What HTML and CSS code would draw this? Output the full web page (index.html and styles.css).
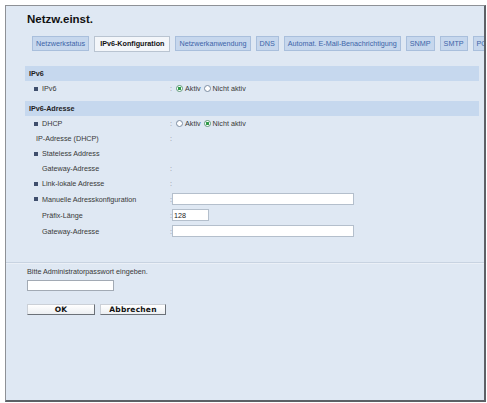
FILE: index.html
```html
<!DOCTYPE html>
<html lang="de">
<head>
<meta charset="utf-8">
<title>Netzw.einst.</title>
<link rel="stylesheet" href="styles.css">
</head>
<body>
<div class="frame">
  <h1 class="title">Netzw.einst.</h1>
  <div class="tabs">
    <span class="tab">Netzwerkstatus</span>
    <span class="tab active">IPv6-Konfiguration</span>
    <span class="tab">Netzwerkanwendung</span>
    <span class="tab">DNS</span>
    <span class="tab">Automat. E-Mail-Benachrichtigung</span>
    <span class="tab">SNMP</span>
    <span class="tab">SMTP</span>
    <span class="tab">POP3/IMAP4</span>
  </div>

  <div class="content">
    <div class="section">
      <div class="sec-head">IPv6</div>
      <div class="row">
        <div class="label bullet">IPv6</div>
        <div class="value"><span class="colon">:</span><input type="radio" class="radio" name="ipv6" checked><span>Aktiv</span><input type="radio" class="radio second" name="ipv6"><span>Nicht aktiv</span></div>
      </div>
    </div>

    <div class="section">
      <div class="sec-head">IPv6-Adresse</div>
      <div class="row">
        <div class="label bullet">DHCP</div>
        <div class="value"><span class="colon">:</span><input type="radio" class="radio" name="dhcp"><span>Aktiv</span><input type="radio" class="radio second" name="dhcp" checked><span>Nicht aktiv</span></div>
      </div>
      <div class="row">
        <div class="label sub">IP-Adresse (DHCP)</div>
        <div class="value"><span class="colon">:</span></div>
      </div>
      <div class="row">
        <div class="label bullet">Stateless Address</div>
        <div class="value"></div>
      </div>
      <div class="row">
        <div class="label sub2">Gateway-Adresse</div>
        <div class="value"><span class="colon">:</span></div>
      </div>
      <div class="row">
        <div class="label bullet">Link-lokale Adresse</div>
        <div class="value"><span class="colon">:</span></div>
      </div>
      <div class="row tall">
        <div class="label bullet">Manuelle Adresskonfiguration</div>
        <div class="value"><span class="colon tight">:</span><input type="text" class="field wide" value=""></div>
      </div>
      <div class="row tall">
        <div class="label sub2">Präfix-Länge</div>
        <div class="value"><span class="colon tight">:</span><input type="text" class="field short" value="128"></div>
      </div>
      <div class="row tall">
        <div class="label sub2">Gateway-Adresse</div>
        <div class="value"><span class="colon tight">:</span><input type="text" class="field wide" value=""></div>
      </div>
    </div>
  </div>

  <div class="sep"></div>

  <div class="auth">
    <div class="auth-text">Bitte Administratorpasswort eingeben.</div>
    <input type="password" class="field pass" value="">
    <div class="buttons">
      <button class="btn ok">OK</button>
      <button class="btn cancel">Abbrechen</button>
    </div>
  </div>
</div>
</body>
</html>
```

FILE: styles.css
```css
* {
  box-sizing: border-box;
}

body {
  margin: 0;
  background: #ffffff;
  font-family: "Liberation Sans", Arial, sans-serif;
  font-size: 7.2px;
  color: #383838;
}

.frame {
  margin: 5px 0 0 5px;
  width: 481px;
  height: 397px;
  border-style: solid;
  border-width: 1px 2px 2px 1px;
  border-color: #8e9196 #5d6166 #5d6166 #8e9196;
  background: #dfe8f3;
  overflow: hidden;
}

.title {
  margin: 6px 0 0 21px;
  font-size: 11.5px;
  line-height: 14px;
  font-weight: bold;
  color: #111111;
}

.tabs {
  display: flex;
  align-items: flex-start;
  gap: 5px;
  margin-top: 10px;
  padding-left: 26px;
  height: 16px;
  white-space: nowrap;
  overflow: hidden;
}

.tab {
  flex: none;
  height: 15px;
  line-height: 13px;
  padding: 0 3px;
  border: 1px solid #a9bfdc;
  background: #c6d7ed;
  color: #3c64a8;
}

.tab.active {
  height: 16px;
  padding: 0 5px;
  background: #f3f6fa;
  border-color: #b9c4d1;
  color: #111111;
  font-weight: bold;
}

.content {
  margin: 14px 5px 0 19px;
}

.section + .section {
  margin-top: 5px;
}

.sec-head {
  height: 15px;
  line-height: 15px;
  padding-left: 4px;
  background: #c6d8ee;
  font-weight: bold;
  color: #1c1c1c;
}

.row {
  display: flex;
  align-items: center;
  height: 15px;
}

.row.tall {
  height: 16px;
}

.label {
  flex: none;
  width: 145px;
  display: flex;
  align-items: center;
  padding-left: 9px;
}

.label.bullet::before {
  content: "";
  flex: none;
  width: 4px;
  height: 4px;
  margin-right: 4px;
  background: #3f4e6c;
}

.label.sub {
  padding-left: 11px;
}

.label.sub2 {
  padding-left: 17px;
}

.value {
  display: flex;
  align-items: center;
}

.colon {
  width: 6px;
  color: #8a8f96;
}

.colon.tight {
  width: 2px;
}

.radio {
  appearance: none;
  -webkit-appearance: none;
  flex: none;
  width: 7px;
  height: 7px;
  margin: 0 2px 0 0;
  border: 1px solid #7b8ca1;
  border-radius: 50%;
  background: #ffffff;
}

.radio:checked {
  background: radial-gradient(circle, #2e9a48 0 1.4px, #ffffff 2px);
  border-color: #5f9a78;
}

.radio.second {
  margin-left: 3px;
}

.field {
  margin: 0;
  height: 12px;
  padding: 0 1px;
  border: 1px solid #b4bfcc;
  background: #ffffff;
  font: inherit;
  color: #222222;
  outline: none;
}

.field.wide {
  width: 182px;
}

.field.short {
  width: 37px;
}

.sep {
  margin-top: 23px;
  height: 2px;
  border-top: 1px solid #c8d3e1;
  border-bottom: 1px solid #ebf0f7;
}

.auth {
  padding-left: 21px;
}

.auth-text {
  margin-top: 2px;
  line-height: 12px;
}

.field.pass {
  display: block;
  margin-top: 2px;
  width: 87px;
  height: 11px;
  border-color: #a2aab4;
}

.buttons {
  display: flex;
  gap: 5px;
  margin-top: 13px;
}

.btn {
  height: 11px;
  padding: 0;
  border: 1px solid;
  border-color: #cbd0d7 #6b7178 #6b7178 #cbd0d7;
  background: linear-gradient(#ffffff, #eceff2);
  font-family: "DejaVu Sans", Verdana, sans-serif;
  font-weight: bold;
  font-size: 7.5px;
  line-height: 9px;
  color: #111111;
  letter-spacing: 0.2px;
}

.btn.ok {
  width: 68px;
}

.btn.cancel {
  width: 66px;
}
```
